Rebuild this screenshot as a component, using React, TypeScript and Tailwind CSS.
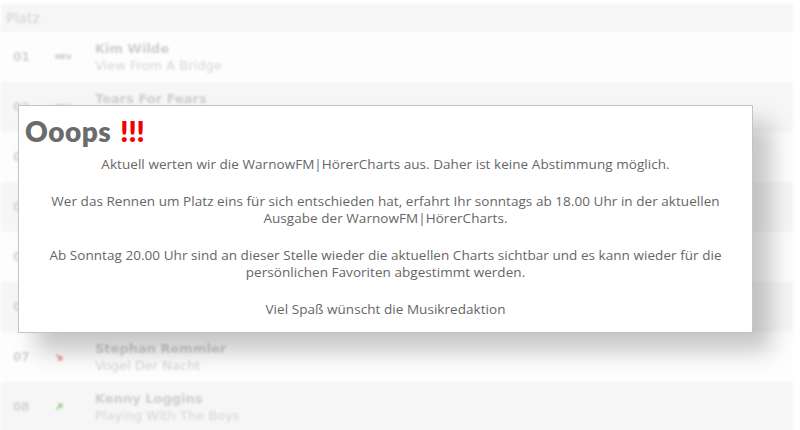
const rows = [
  { pos: '01', trend: 'neu', artist: 'Kim Wilde', title: 'View From A Bridge' },
  { pos: '02', trend: 'neu', artist: 'Tears For Fears', title: 'Everybody Wants To Rule The World' },
  { pos: '03', trend: 'up', artist: 'Nena', title: 'Irgendwie, Irgendwo, Irgendwann' },
  { pos: '04', trend: 'down', artist: 'Alphaville', title: 'Big In Japan' },
  { pos: '05', trend: 'up', artist: 'Falco', title: 'Rock Me Amadeus' },
  { pos: '06', trend: 'down', artist: 'Eurythmics', title: 'Sweet Dreams' },
  { pos: '07', trend: 'down', artist: 'Stephan Remmler', title: 'Vogel Der Nacht' },
  { pos: '08', trend: 'up', artist: 'Kenny Loggins', title: 'Playing With The Boys' },
]

function Trend({ kind }: { kind: string }) {
  if (kind === 'neu') return <span className="text-[7px] font-bold text-[#c8c8c8]">NEU</span>
  if (kind === 'up')
    return (
      <svg width="8" height="8" viewBox="0 0 10 10">
        <path d="M2 8 L8 2 M4 2 H8 V6" stroke="#9bd08f" strokeWidth="2.5" fill="none" />
      </svg>
    )
  return (
    <svg width="8" height="8" viewBox="0 0 10 10">
      <path d="M2 2 L8 8 M4 8 H8 V4" stroke="#e79a9a" strokeWidth="2.5" fill="none" />
    </svg>
  )
}

export default function App() {
  return (
    <div className="relative w-[800px] h-[430px] overflow-hidden bg-white" style={{ fontFamily: 'Verdana, "DejaVu Sans", sans-serif' }}>
      {/* Blurred chart table */}
      <div className="pt-[4px] pl-[1px] w-[793px] blur-[1px]">
        <div className="h-[28px] bg-[#f6f6f6] flex items-center pl-[5px] text-[14px] text-[#d2d2d2]">Platz</div>
        {rows.map((r, i) => (
          <div key={r.pos} className={`h-[50px] flex items-center ${i % 2 === 0 ? 'bg-[#fdfdfd]' : 'bg-[#f6f6f6]'}`}>
            <div className="w-[42px] pl-[12px] text-[12px] font-bold text-[#d4d4d4]">{r.pos}</div>
            <div className="w-[52px] pl-[12px] flex items-center"><Trend kind={r.trend} /></div>
            <div className="flex flex-col leading-[17px]">
              <span className="text-[13px] font-bold text-[#cfcfcf]">{r.artist}</span>
              <span className="text-[13px] text-[#d6d6d6]">{r.title}</span>
            </div>
          </div>
        ))}
      </div>

      {/* Notice overlay */}
      <div
        className="absolute left-[18px] top-[105px] w-[735px] h-[228px] bg-white border border-[#c4c4c4] shadow-[18px_18px_22px_rgba(0,0,0,0.22)] px-[6px] pt-[8px] text-[#666666]"
        style={{ fontFamily: '"Open Sans", sans-serif' }}
      >
        <h1 className="text-[28px] font-extrabold leading-[34px] tracking-[0.5px] text-[#6b6b6b]" style={{ fontFamily: 'Lato, sans-serif' }}>
          Ooops <span className="ml-[2px] text-[#ee0000] tracking-[0px]">!!!</span>
        </h1>
        <div className="mt-[8px] text-center text-[13.5px] leading-[17px] tracking-[0.05px]">
          <p className="mb-[20px]">Aktuell werten wir die WarnowFM|HörerCharts aus. Daher ist keine Abstimmung möglich.</p>
          <p className="mb-[20px]">
            Wer das Rennen um Platz eins für sich entschieden hat, erfahrt Ihr sonntags ab 18.00 Uhr in der aktuellen
            <br />
            Ausgabe der WarnowFM|HörerCharts.
          </p>
          <p className="mb-[20px]">
            Ab Sonntag 20.00 Uhr sind an dieser Stelle wieder die aktuellen Charts sichtbar und es kann wieder für die
            <br />
            persönlichen Favoriten abgestimmt werden.
          </p>
          <p>Viel Spaß wünscht die Musikredaktion</p>
        </div>
      </div>
    </div>
  )
}
